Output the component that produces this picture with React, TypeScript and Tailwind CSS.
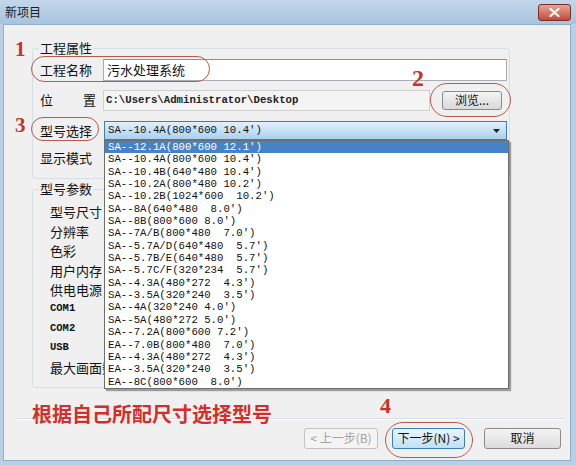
import React from 'react';

const models = [
  "SA--12.1A(800*600 12.1')",
  "SA--10.4A(800*600 10.4')",
  "SA--10.4B(640*480 10.4')",
  "SA--10.2A(800*480 10.2')",
  "SA--10.2B(1024*600  10.2')",
  "SA--8A(640*480  8.0')",
  "SA--8B(800*600 8.0')",
  "SA--7A/B(800*480  7.0')",
  "SA--5.7A/D(640*480  5.7')",
  "SA--5.7B/E(640*480  5.7')",
  "SA--5.7C/F(320*234  5.7')",
  "SA--4.3A(480*272  4.3')",
  "SA--3.5A(320*240  3.5')",
  "SA--4A(320*240 4.0')",
  "SA--5A(480*272 5.0')",
  "SA--7.2A(800*600 7.2')",
  "EA--7.0B(800*480  7.0')",
  "EA--4.3A(480*272  4.3')",
  "EA--3.5A(320*240  3.5')",
  "EA--8C(800*600  8.0')",
];

const params = ['型号尺寸', '分辨率', '色彩', '用户内存', '供电电源', 'COM1', 'COM2', 'USB', '最大画面数'];

const Mark: React.FC<{ n: string; className: string }> = ({ n, className }) => (
  <span
    className={`absolute font-['Liberation_Serif',serif] font-bold text-[#c8322b] leading-none ${className}`}
  >
    {n}
  </span>
);

export default function App() {
  return (
    <div className="relative w-[576px] h-[465px] overflow-hidden bg-[#b8cfe6] flex flex-col font-['Noto_Sans_CJK_SC',sans-serif] text-[#111]">
      {/* title bar */}
      <div className="h-[24px] flex items-center justify-between pl-[5px] pr-[5px] bg-gradient-to-b from-[#c3d7ec] to-[#a8c3de]">
        <span className="text-[12px] text-[#1b1b1b]">新项目</span>
        <div className="w-[33px] h-[17px] rounded-[3px] border border-[#7a2e25] bg-gradient-to-b from-[#e7a597] to-[#c04a3c] flex items-center justify-center">
          <svg width="11" height="9" viewBox="0 0 11 9">
            <path d="M1.5 1 L9.5 8 M9.5 1 L1.5 8" stroke="#fff" strokeWidth="2.2" strokeLinecap="round" />
          </svg>
        </div>
      </div>

      {/* client area */}
      <div className="flex-1 ml-[3px] mr-[5px] mb-[4px] border border-[#8eaecb] bg-[#f0f0f0] flex flex-col">
        {/* 工程属性 */}
        <fieldset className="mt-[16px] ml-[28px] w-[478px] border border-[#d5dfe5] rounded-[3px] pb-[12px]">
          <legend className="ml-[6px] px-[1px] text-[13px] leading-[14px]">工程属性</legend>
          <div className="mt-[4px] flex items-center h-[22px]">
            <div className="w-[70px] pl-[7px] text-[13px]">工程名称</div>
            <div className="w-[404px] h-[22px] bg-white border border-[#abadb3] border-t-[#8e8f8f] pl-[3px] flex items-center text-[13px]">
              污水处理系统
            </div>
          </div>
          <div className="mt-[8px] flex items-center h-[22px]">
            <div className="w-[70px] pl-[7px] text-[13px]">
              <div className="w-[56px] flex justify-between">
                <span>位</span>
                <span>置</span>
              </div>
            </div>
            <div className="w-[327px] h-[21px] bg-[#f4f4f4] border border-[#cfcfcf] pl-[2px] flex items-center font-['Liberation_Mono',monospace] text-[10.7px] font-bold text-[#222]">
              C:\Users\Administrator\Desktop
            </div>
            <button className="ml-[12px] w-[60px] h-[19px] rounded-[3px] border border-[#8a8a8a] bg-gradient-to-b from-[#f4f4f4] to-[#dadada] text-[12px] leading-none flex items-center justify-center">
              浏览...
            </button>
          </div>
          <div className="mt-[10px] flex items-center h-[19px]">
            <div className="w-[71px] pl-[7px] text-[13px]">型号选择</div>
            <div className="w-[403px] h-[19px] border border-[#3c7fb1] bg-gradient-to-b from-[#e2f0fb] to-[#a9d1ef] flex items-center justify-between pl-[3px] pr-[6px]">
              <span className="font-['Liberation_Mono',monospace] text-[10.7px] whitespace-pre">SA--10.4A(800*600 10.4')</span>
              <svg width="7" height="4" viewBox="0 0 7 4">
                <path d="M0 0 H7 L3.5 4 Z" fill="#222" />
              </svg>
            </div>
          </div>
          <div className="mt-[9px] flex items-center h-[17px]">
            <div className="pl-[7px] text-[13px]">显示模式</div>
          </div>
        </fieldset>

        {/* 型号参数 */}
        <fieldset className="mt-[3px] ml-[28px] w-[478px] border border-[#d5dfe5] rounded-[3px] pb-[9px]">
          <legend className="ml-[6px] px-[1px] text-[13px] leading-[14px]">型号参数</legend>
          <div className="mt-[6px] flex flex-col">
            {params.map((p) => (
              <div
                key={p}
                className={`h-[19.5px] flex items-center pl-[17px] ${
                  p.startsWith('COM') || p === 'USB'
                    ? "font-['Liberation_Mono',monospace] text-[10.5px] font-bold"
                    : 'text-[13px]'
                }`}
              >
                {p}
              </div>
            ))}
          </div>
        </fieldset>

        {/* separator */}
        <div className="mt-[30px] ml-[11px] mr-[5px] border-t border-[#d5dfe5] border-b border-b-white" />

        {/* buttons */}
        <div className="mt-[8px] flex justify-end pr-[9px] text-[12px]">
          <button className="w-[74px] h-[21px] rounded-[3px] border border-[#c2c2c2] bg-[#f4f4f4] text-[#a3a3a3] flex items-center justify-center">
            &lt; 上一步(B)
          </button>
          <button className="ml-[14px] w-[73px] h-[21px] rounded-[3px] border border-[#3c7fb1] bg-gradient-to-b from-[#e9f5fd] to-[#bfe1f5] text-[#111] flex items-center justify-center">
            下一步(N) &gt;
          </button>
          <button className="ml-[19px] w-[77px] h-[21px] rounded-[3px] border border-[#8a8a8a] bg-gradient-to-b from-[#f4f4f4] to-[#dcdcdc] text-[#111] flex items-center justify-center">
            取消
          </button>
        </div>
      </div>

      {/* dropdown list (open combo) */}
      <div className="absolute left-[104px] top-[140px] w-[405px] h-[249px] bg-white border border-[#6e6e6e] shadow-[2px_2px_1px_rgba(0,0,0,0.35)] flex flex-col">
        {models.map((m, i) => (
          <div
            key={m}
            className={`h-[12.35px] leading-[12.35px] pl-[3px] font-['Liberation_Mono',monospace] text-[10.7px] whitespace-pre ${
              i === 0 ? 'bg-[#4683c4] text-white' : 'text-[#111]'
            }`}
          >
            {m}
          </div>
        ))}
      </div>

      {/* annotations */}
      <Mark n="1" className="left-[15px] top-[39px] text-[21px]" />
      <Mark n="2" className="left-[412px] top-[66px] text-[24px]" />
      <Mark n="3" className="left-[15px] top-[115px] text-[21px]" />
      <Mark n="4" className="left-[380px] top-[395px] text-[22px]" />

      <div className="absolute left-[31px] top-[56px] w-[179px] h-[26px] rounded-full border-[1.5px] border-[#b9594b]" />
      <div className="absolute left-[430px] top-[83px] w-[81px] h-[34px] rounded-full border-[1.5px] border-[#b9594b]" />
      <div className="absolute left-[31px] top-[117px] w-[68px] h-[24px] rounded-full border-[1.5px] border-[#b9594b]" />
      <div className="absolute left-[385px] top-[422px] w-[88px] h-[36px] rounded-full border-[1.5px] border-[#b9594b]" />

      <div className="absolute left-[32px] top-[401px] text-[20px] leading-[26px] font-bold text-[#d22f2a]">
        根据自己所配尺寸选择型号
      </div>
    </div>
  );
}
